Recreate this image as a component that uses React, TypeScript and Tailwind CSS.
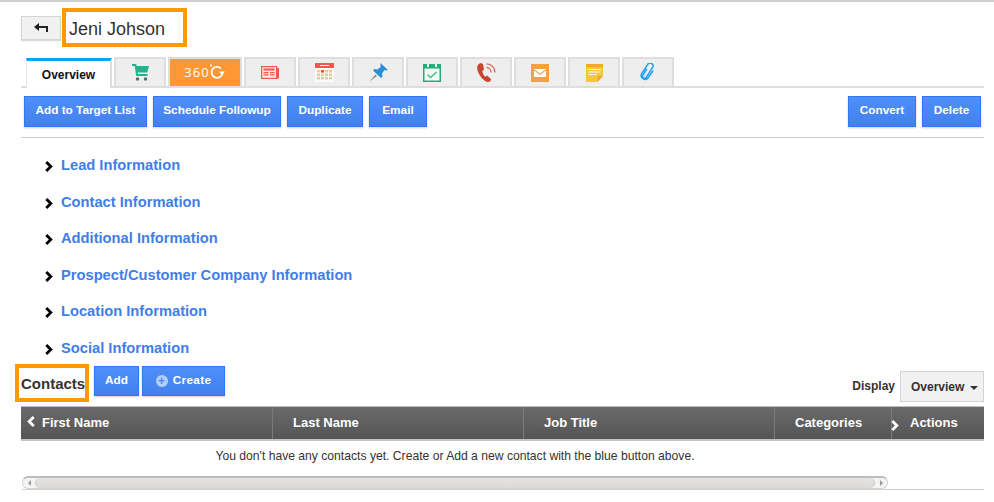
import type { ReactNode } from 'react';

const SECTIONS = [
  'Lead Information',
  'Contact Information',
  'Additional Information',
  'Prospect/Customer Company Information',
  'Location Information',
  'Social Information',
];

function Btn({ children, className = '' }: { children: ReactNode; className?: string }) {
  return (
    <button className={`flex items-center justify-center bg-gradient-to-b from-[#4e8ffb] to-[#4380ee] border border-[#2f78f5] text-white text-[11.8px] font-bold shadow-[0_1px_2px_rgba(0,0,0,0.2)] ${className}`}>
      {children}
    </button>
  );
}

function Tab({ children, className = '' }: { children: ReactNode; className?: string }) {
  return (
    <div className={`h-[29px] flex items-center justify-center border-2 border-b-0 border-[#dedede] ${className}`}>
      {children}
    </div>
  );
}

function Chevron({ dir = 'right', color = '#000' }: { dir?: 'left' | 'right'; color?: string }) {
  return (
    <svg width="8" height="11" viewBox="0 0 8 11" className="shrink-0">
      <path d={dir === 'right' ? 'M1.300 1l4.500 4.500-4.500 4.500' : 'M6.700 1L2.200 5.500l4.500 4.500'} fill="none" stroke={color} strokeWidth="2.800" />
    </svg>
  );
}

function BackArrow() {
  return (
    <svg width="14" height="9" viewBox="0 0 14 9">
      <path d="M0 4L5 0v3h9v6h-2V5H5v3z" fill="#222" />
    </svg>
  );
}

function CartIcon() {
  return (
    <svg width="17" height="17" viewBox="0 0 17 17">
      <path d="M0 0h4l.8 2H17l-1.800 6.500H5.500l.4 1.500H15.500v2H4.200L2.700 2H0z" fill="#1fb58f" />
      <circle cx="5.500" cy="15" r="1.700" fill="#666" />
      <circle cx="13.500" cy="15" r="1.700" fill="#666" />
    </svg>
  );
}

function Icon360() {
  return (
    <span className="flex items-center text-white text-[13px] tracking-[1px] font-['Open_Sans',sans-serif]">
      360
      <svg width="17" height="17" viewBox="0 0 17 17" className="-ml-px -mt-[2px]">
        <path d="M12 5.500A5.500 5.500 0 1 0 13.500 10" fill="none" stroke="#fff" strokeWidth="1.800" />
        <path d="M10 8.500h6l-3 3.800z" fill="#fff" />
        <circle cx="2" cy="2.500" r="1" fill="#fff" />
      </svg>
    </span>
  );
}

function NewsIcon() {
  return (
    <svg width="18" height="13" viewBox="0 0 18 13">
      <path d="M15 2h3v10.500h-3z" fill="#ef5b4b" />
      <rect x="0.600" y="0.600" width="15" height="11.800" fill="#fbe3df" stroke="#ef5b4b" strokeWidth="1.200" />
      <path d="M2.500 2.500h11v2h-11zM2.500 6h5v1.200h-5zM9 6h4.500v1.200H9zM2.500 8.200h5v1.200h-5zM9 8.200h4.500v1.200H9z" fill="#ef5b4b" />
    </svg>
  );
}

function CalendarIcon() {
  return (
    <svg width="19" height="19" viewBox="0 0 19 19">
      <rect width="19" height="19" fill="#fbfaf5" />
      <path d="M0 0h19v5H0z" fill="#f0594a" />
      <path d="M5 2h9v1H5z" fill="#fff" />
      <path d="M2 7h3v2.500H2zM6 7h3v2.500H6zM10 7h3v2.500h-3zM14 7h3v2.500h-3zM2 10.500h3V13H2zM6 10.500h3V13H6zM10 10.500h3V13h-3zM14 10.500h3V13h-3zM2 14h3v2.500H2zM6 14h3v2.500H6zM10 14h3v2.500h-3zM14 14h3v2.500h-3z" fill="#d9cfa3" />
      <path d="M6 7h3v2.500H6z" fill="#e8503f" />
    </svg>
  );
}

function PinIcon() {
  return (
    <svg width="19" height="19" viewBox="0 0 19 19">
      <path d="M0.500 18.500l6-7 1.500 1.500z" fill="#8d8d8d" />
      <path d="M11.500 0L19 7l-2 .5-1.500-.5-2.500 3.500.5 3-1.500 1.500L4 7.500 5.500 6l3 .5L11.500 4z" fill="#2a8fd8" />
    </svg>
  );
}

function CheckCalIcon() {
  return (
    <svg width="18" height="18" viewBox="0 0 18 18">
      <path d="M0 0h18v18H0z" fill="#24ad78" />
      <path d="M1.500 4.500h15v12h-15z" fill="#f3faf6" />
      <path d="M4 0h2v3H4zM12 0h2v3h-2z" fill="#f3faf6" />
      <path d="M4.500 10.500l3 3 6-5.500" fill="none" stroke="#3fb98b" strokeWidth="1.300" />
    </svg>
  );
}

function PhoneIcon() {
  return (
    <svg width="19" height="19" viewBox="0 0 19 19">
      <path d="M3.500 0C1 1-.5 3.500.5 7c1 4.500 4.500 9 8.500 11.500 1.500.8 3.300.5 4.500-.5l.5-2-4-3.500-1.800 1.300C6.500 12 5.500 9.800 5.300 8l1.700-1.500L6 1z" fill="#c8452f" />
      <path d="M9.500 0.800a8.500 8.500 0 0 1 8.500 8.700M9.500 4.500a4.800 4.800 0 0 1 4.500 5" fill="none" stroke="#cf6a55" strokeWidth="1.300" />
    </svg>
  );
}

function MailIcon() {
  return (
    <svg width="18" height="18" viewBox="0 0 18 18">
      <rect width="18" height="18" fill="#f3a243" />
      <path d="M3 5h12v8H3z" fill="#fff" />
      <path d="M3 5l6 4.500L15 5v1.500L9 11 3 6.500z" fill="#f3a243" />
    </svg>
  );
}

function NoteIcon() {
  return (
    <svg width="17" height="18" viewBox="0 0 17 18">
      <path d="M0 0h17v12l-5.500 6H0z" fill="#f5c935" />
      <path d="M0 0h17v3H0z" fill="#f9a72b" />
      <path d="M2.500 5h12v1h-12zM2.500 7.500h12v1h-12zM2.500 10h8v1h-8z" fill="#fff" />
      <path d="M17 12h-5.500v6z" fill="#f0a72a" />
    </svg>
  );
}

function ClipIcon() {
  return (
    <svg width="17" height="19" viewBox="0 0 17 19">
      <path d="M6.500 6.500l-3.800 6.200c-1 1.800 2.200 3.800 3.500 1.800l6.600-10.300c1.800-2.800-3-5.800-4.900-3L1.800 10.500c-2.500 4 3.700 8.500 6.500 4.200L12.800 8" fill="none" stroke="#1da1f2" strokeWidth="1.500" strokeLinecap="round" />
    </svg>
  );
}

const TABS = [<CartIcon />, <Icon360 />, <NewsIcon />, <CalendarIcon />, <PinIcon />, <CheckCalIcon />, <PhoneIcon />, <MailIcon />, <NoteIcon />, <ClipIcon />];

function OrangeBox({ children, className = '' }: { children: ReactNode; className?: string }) {
  return <div className={`border-4 border-[#ff9900] flex items-center bg-white ${className}`}>{children}</div>;
}

function HeaderCell({ label, className }: { label: string; className: string }) {
  return (
    <div className={`h-full flex items-center pt-px border-r border-[#7a7a7a] ${className}`}>
      {label}
    </div>
  );
}

export default function App() {
  return (
    <div className="w-[994px] h-[502px] overflow-hidden bg-white border-t-2 border-[#cfcfcf] font-['Liberation_Sans',Arial,sans-serif] text-[#333]">
      <div className="flex items-center pl-[21px] pt-[6px] gap-px">
        <button className="w-[40px] h-[24px] flex items-center justify-center bg-[#f1f1f1] border border-[#d4d4d4] shadow-[0_1px_1px_rgba(0,0,0,0.15)]">
          <BackArrow />
        </button>
        <OrangeBox className="w-[125px] h-[39px] pl-[3px] pt-[4px] text-[18px] text-[#333]">Jeni Johson</OrangeBox>
      </div>

      <div className="mt-[11px] mx-[21px] w-[963px] h-[30px] flex items-end border-b-2 border-[#dedede] pl-[5px] gap-[2px]">
        <div className="w-[86px] h-[30px] -mb-[2px] bg-white border-t-[3px] border-t-[#00a8f3] border-l border-r-2 border-l-[#e6e6e6] border-r-[#dedede] flex items-center justify-center text-[12px] font-bold text-[#111]">
          Overview
        </div>
        {TABS.map((icon, i) => (
          <Tab key={i} className={i === 1 ? 'w-[74px] bg-[#ff9734]' : 'w-[52px] bg-[#eeeeee]'}>
            {icon}
          </Tab>
        ))}
      </div>

      <div className="mt-[8px] ml-[24px] w-[957px] flex gap-[6px]">
        <Btn className="h-[31px] pb-[2px] w-[123px]">Add to Target List</Btn>
        <Btn className="h-[31px] pb-[2px] w-[128px]">Schedule Followup</Btn>
        <Btn className="h-[31px] pb-[2px] w-[76px]">Duplicate</Btn>
        <Btn className="h-[31px] pb-[2px] w-[58px]">Email</Btn>
        <div className="flex-1" />
        <Btn className="h-[31px] pb-[2px] w-[68px]">Convert</Btn>
        <Btn className="h-[31px] pb-[2px] w-[59px]">Delete</Btn>
      </div>

      <div className="mt-[10px] ml-[21px] w-[963px] border-t border-[#cfcfcf]" />

      <div className="mt-[16.5px] ml-[45px] flex flex-col gap-[14.5px]">
        {SECTIONS.map((s) => (
          <div key={s} className="h-[22px] flex items-center gap-[8px] text-[14.7px] font-bold text-[#3f7ee8]">
            <span className="mt-[2px]"><Chevron /></span>
            <span>{s}</span>
          </div>
        ))}
      </div>

      <div className="mt-[4.5px] ml-[15px] w-[969px] flex items-start">
        <OrangeBox className="w-[74px] h-[38px] pl-[2px] pt-[3px] text-[15px] font-bold text-[#333]">Contacts</OrangeBox>
        <Btn className="h-[30px] w-[45px] ml-[5px] mt-[2px]">Add</Btn>
        <Btn className="h-[30px] w-[83px] ml-[3px] mt-[2px] gap-[5px] tracking-[0.3px]">
          <span className="w-[12px] h-[12px] rounded-full bg-[#b5d0f8] text-[#4a87f3] flex items-center justify-center text-[12px] leading-none">+</span>
          Create
        </Btn>
        <div className="flex-1" />
        <span className="text-[12px] font-bold mt-[13px] mr-[5px]">Display</span>
        <div className="w-[84px] h-[31px] mt-[7px] pl-[10px] pt-px bg-[#f1f1f1] border border-[#d4d4d4] flex items-center gap-[6px] text-[12px] font-bold">
          Overview
          <span className="border-x-[4px] border-x-transparent border-t-[4px] border-t-[#333] mt-[2px]" />
        </div>
      </div>

      <div className="mt-[4px] ml-[21px] w-[963px] h-[35px] flex items-center bg-gradient-to-b from-[#6a6a6a] to-[#555] border-t border-[#bdbdbd] border-b-2 border-b-[#c4c4c4] text-white text-[13px] font-bold relative">
        <HeaderCell label="First Name" className="w-[252px] pl-[21px]" />
        <HeaderCell label="Last Name" className="w-[251px] pl-[20px]" />
        <HeaderCell label="Job Title" className="w-[251px] pl-[20px]" />
        <HeaderCell label="Categories" className="w-[117px] pl-[20px]" />
        <div className="flex-1 pl-[18px] pt-px">Actions</div>
        <span className="absolute left-[6px] top-[9px]"><Chevron dir="left" color="#fff" /></span>
        <span className="absolute left-[870px] top-[13px]"><Chevron color="#fff" /></span>
      </div>

      <div className="mt-[7px] ml-[21px] w-[868px] text-center text-[12.15px] text-[#333] h-[14px] leading-[16px]">
        You don't have any contacts yet. Create or Add a new contact with the blue button above.
      </div>

      <div className="mt-[14px] ml-[22px] w-[962px] flex items-end border-b border-[#cfcfcf]">
        <div className="w-[866px] h-[13px] flex items-center bg-[#f4f4f4] border border-[#d4d4d4] rounded-[6px] border-t-2 border-t-[#bdbdbd]">
          <span className="w-[12px] flex justify-center">
            <span className="border-y-[3px] border-y-transparent border-r-[3px] border-r-[#999]" />
          </span>
          <div className="flex-1 h-full rounded-[6px] bg-gradient-to-b from-[#e6e5e2] to-[#dad9d6] border-x border-[#c8c8c8]" />
          <span className="w-[12px] flex justify-center">
            <span className="border-y-[3px] border-y-transparent border-l-[3px] border-l-[#999]" />
          </span>
        </div>
      </div>
    </div>
  );
}
